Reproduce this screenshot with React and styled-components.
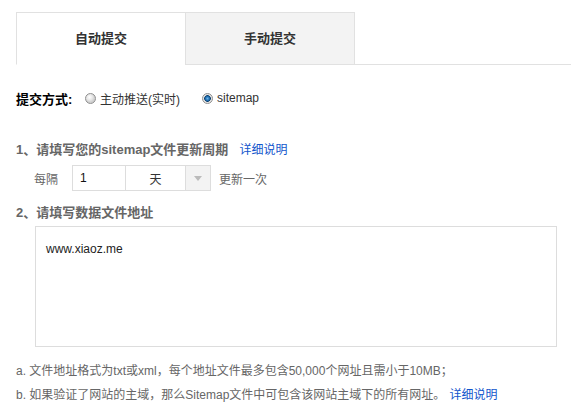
import React from "react";
import styled, { createGlobalStyle } from "styled-components";

const Global = createGlobalStyle`
  html, body { margin: 0; padding: 0; background: #fff; }
  body {
    font-family: "Liberation Sans", "Noto Sans CJK SC", sans-serif;
    font-size: 12px;
    color: #333;
  }
`;

const Page = styled.div`
  padding: 12px 0 0 16px;
  width: 571px;
  box-sizing: border-box;
`;

const TabBar = styled.div`
  display: flex;
  height: 53px;
`;

const Tab = styled.div`
  width: 170px;
  height: 53px;
  box-sizing: border-box;
  border: 1px solid #e1e1e1;
  border-bottom-color: ${(p) => (p.$active ? "#fff" : "#e1e1e1")};
  background: ${(p) => (p.$active ? "#fff" : "#f3f3f3")};
  margin-left: ${(p) => (p.$active ? "0" : "-1px")};
  display: flex;
  align-items: center;
  justify-content: center;
  font-size: 13px;
  font-weight: bold;
  color: #333;
  padding-bottom: 3px;
`;

const TabFill = styled.div`
  flex: 1;
  border-bottom: 1px solid #e1e1e1;
`;

const MethodRow = styled.div`
  display: flex;
  align-items: center;
  height: 18px;
  margin-top: 24px;
`;

const Label = styled.span`
  font-size: 13px;
  font-weight: bold;
  color: #000;
  width: 69px;
`;

const RadioOpt = styled.label`
  display: flex;
  align-items: center;
  margin-right: ${(p) => p.$mr || 0}px;
  color: #333;
  font-size: 12px;
`;

const RadioDot = styled.span`
  width: 11px;
  height: 11px;
  border-radius: 50%;
  box-sizing: border-box;
  border: 1px solid #8f8f8f;
  margin-right: 4px;
  background: ${(p) =>
    p.$checked
      ? "radial-gradient(circle at 50% 50%, #6fb3e6 0, #1f6fb2 2px, #0d3f6e 3px, #dcdcdc 3.6px, #f4f4f4 5px)"
      : "radial-gradient(circle at 40% 35%, #ffffff 0, #e6e6e6 3px, #cfcfcf 5px)"};
`;

const Heading = styled.div`
  display: flex;
  align-items: center;
  height: 18px;
  margin-top: ${(p) => p.$mt}px;
  font-size: 13px;
  font-weight: bold;
  color: #666;
`;

const Link = styled.a`
  color: #1155cc;
  font-size: 12px;
  font-weight: normal;
  text-decoration: none;
  margin-left: ${(p) => p.$ml || 0}px;
  cursor: pointer;
`;

const PeriodRow = styled.div`
  display: flex;
  align-items: center;
  margin-top: 8px;
  padding-left: 18px;
  height: 26px;
`;

const Muted = styled.span`
  color: #666;
  font-size: 12px;
  margin-right: ${(p) => p.$mr || 0}px;
  margin-left: ${(p) => p.$ml || 0}px;
`;

const NumInput = styled.input`
  width: 54px;
  height: 26px;
  box-sizing: border-box;
  border: 1px solid #ddd;
  padding: 0 0 0 7px;
  font-family: "Liberation Sans", sans-serif;
  font-size: 12px;
  color: #111;
  outline: none;
`;

const Select = styled.div`
  display: flex;
  width: 86px;
  height: 26px;
  box-sizing: border-box;
  border: 1px solid #ddd;
  margin-left: -1px;
`;

const SelectValue = styled.div`
  flex: 1;
  display: flex;
  align-items: center;
  justify-content: center;
  color: #333;
  font-size: 12px;
`;

const SelectArrow = styled.div`
  width: 24px;
  background: #f3f3f3;
  border-left: 1px solid #ddd;
  display: flex;
  align-items: center;
  justify-content: center;
  &::after {
    content: "";
    border-left: 4px solid transparent;
    border-right: 4px solid transparent;
    border-top: 5px solid #bbb;
  }
`;

const AddrBox = styled.textarea`
  display: block;
  margin: 6px 0 0 19px;
  width: 522px;
  height: 121px;
  box-sizing: border-box;
  border: 1px solid #ddd;
  padding: 13px 10px;
  font-family: "Liberation Sans", sans-serif;
  font-size: 12px;
  line-height: 18px;
  color: #222;
  resize: none;
  outline: none;
`;

const Notes = styled.div`
  margin-top: 12px;
`;

const Note = styled.div`
  height: 24px;
  line-height: 24px;
  color: #666;
  font-size: 12px;
  white-space: nowrap;
`;

export default function App() {
  return (
    <>
      <Global />
      <Page>
        <TabBar>
          <Tab $active>自动提交</Tab>
          <Tab>手动提交</Tab>
          <TabFill />
        </TabBar>

        <MethodRow>
          <Label>提交方式:</Label>
          <RadioOpt $mr={22}>
            <RadioDot />
            主动推送(实时)
          </RadioOpt>
          <RadioOpt>
            <RadioDot $checked />
            sitemap
          </RadioOpt>
        </MethodRow>

        <Heading $mt={32}>
          1、请填写您的sitemap文件更新周期
          <Link $ml={11}>详细说明</Link>
        </Heading>

        <PeriodRow>
          <Muted $mr={14}>每隔</Muted>
          <NumInput defaultValue="1" />
          <Select>
            <SelectValue>天</SelectValue>
            <SelectArrow />
          </Select>
          <Muted $ml={8}>更新一次</Muted>
        </PeriodRow>

        <Heading $mt={11}>2、请填写数据文件地址</Heading>

        <AddrBox defaultValue="www.xiaoz.me" />

        <Notes>
          <Note>a. 文件地址格式为txt或xml，每个地址文件最多包含50,000个网址且需小于10MB；</Note>
          <Note>
            b. 如果验证了网站的主域，那么Sitemap文件中可包含该网站主域下的所有网址。
            <Link $ml={4}>详细说明</Link>
          </Note>
        </Notes>
      </Page>
    </>
  );
}
